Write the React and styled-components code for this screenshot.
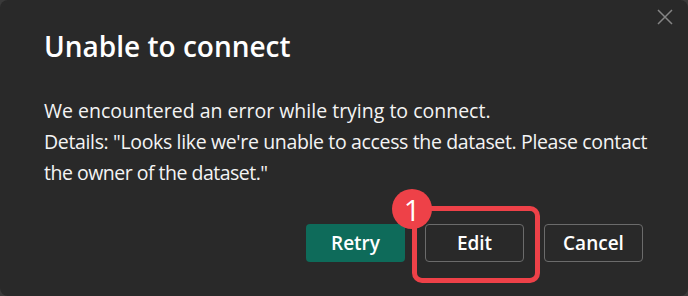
import React from "react";
import styled, { createGlobalStyle } from "styled-components";

const Global = createGlobalStyle`
  html, body { margin: 0; padding: 0; background: #3a3a3a; }
  body { width: 688px; height: 296px; overflow: hidden; }
  #root { width: 688px; height: 296px; }
`;

const Dialog = styled.div`
  position: relative;
  box-sizing: border-box;
  width: 688px;
  height: 296px;
  background: #292929;
  border-radius: 8px;
  padding: 29px 45px 34px 44px;
  display: flex;
  flex-direction: column;
  font-family: "Open Sans", "Noto Sans", sans-serif;
  color: #ffffff;
`;

const CloseButton = styled.button`
  position: absolute;
  top: 9px;
  right: 15px;
  width: 16px;
  height: 16px;
  padding: 0;
  border: 0;
  background: transparent;
  display: flex;
  cursor: pointer;
`;

const Title = styled.h1`
  margin: 0;
  font-size: 28px;
  line-height: 34px;
  font-weight: 600;
`;

const Body = styled.div`
  margin: 32px 0 0;
  font-size: 19.5px;
  line-height: 31px;
  font-weight: 400;
  color: #f4f4f4;
  white-space: nowrap;
`;

const Line = styled.div`
  letter-spacing: ${(p) => p.$spacing || "0"};
`;

const Footer = styled.div`
  margin-top: auto;
  display: flex;
  justify-content: flex-end;
  gap: 20px;
`;

const Button = styled.button`
  box-sizing: border-box;
  width: 99px;
  height: 38px;
  padding: 0;
  border-radius: 4px;
  font-family: "Open Sans", "Noto Sans", sans-serif;
  font-size: 19px;
  font-weight: 600;
  color: #ffffff;
  cursor: pointer;
  background: ${(p) => (p.$primary ? "#0e6b5a" : "#292929")};
  border: ${(p) => (p.$primary ? "0" : "1.5px solid #6b6b6b")};
`;

const Highlight = styled.div`
  position: relative;
  display: flex;
`;

const Frame = styled.div`
  position: absolute;
  left: -13px;
  top: -18px;
  right: -16px;
  bottom: -21px;
  border: 5px solid #ee4148;
  border-radius: 10px;
  pointer-events: none;
`;

const Badge = styled.div`
  position: absolute;
  left: -33px;
  top: -35px;
  width: 40px;
  height: 40px;
  border-radius: 50%;
  background: #ee4148;
  color: #ffffff;
  display: flex;
  align-items: center;
  justify-content: center;
  font-family: "Open Sans", sans-serif;
  font-size: 29px;
  font-weight: 400;
  line-height: 1;
`;

export default function App() {
  return (
    <>
      <Global />
      <Dialog>
        <CloseButton aria-label="Close">
          <svg width="16" height="16" viewBox="0 0 16 16">
            <path d="M1 1 L15 15 M15 1 L1 15" stroke="#858585" strokeWidth="1.5" fill="none" />
          </svg>
        </CloseButton>
        <Title>Unable to connect</Title>
        <Body>
          <Line>We encountered an error while trying to connect.</Line>
          <Line $spacing="-0.35px">Details: "Looks like we're unable to access the dataset. Please contact</Line>
          <Line $spacing="-0.5px">the owner of the dataset."</Line>
        </Body>
        <Footer>
          <Button $primary>Retry</Button>
          <Highlight>
            <Button>Edit</Button>
            <Frame />
            <Badge>1</Badge>
          </Highlight>
          <Button>Cancel</Button>
        </Footer>
      </Dialog>
    </>
  );
}
